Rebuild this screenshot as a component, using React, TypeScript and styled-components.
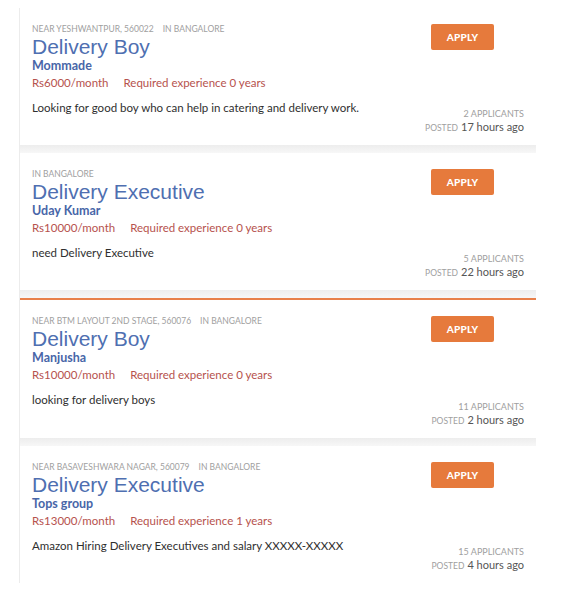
import React from 'react';
import styled, { createGlobalStyle } from 'styled-components';

const GlobalStyle = createGlobalStyle`
    html, body {
        margin: 0;
        padding: 0;
        background: #ffffff;
    }
    body {
        font-family: Lato, "Open Sans", sans-serif;
        -webkit-font-smoothing: antialiased;
    }
`;

const ListContainer = styled.div`
    margin: 8px 25px 0 19px;
    border-left: 1px solid #ececec;
    display: flex;
    flex-direction: column;
`;

const Separator = styled.div`
    height: 8px;
    background: linear-gradient(#ededed, #f7f7f7);
`;

const Card = styled.div<{ $active?: boolean }>`
    box-sizing: border-box;
    height: ${(p) => (p.$active ? 140 : 137)}px;
    background: #ffffff;
    border-top: ${(p) => (p.$active ? '2px solid #e8804a' : 'none')};
    display: flex;
    justify-content: space-between;
    padding: 16px 12px 10px 12px;
`;

const MainColumn = styled.div`
    display: flex;
    flex-direction: column;
`;

const Location = styled.div`
    font-size: 8.5px;
    line-height: 11px;
    color: #a0a0a0;
    text-transform: uppercase;
    display: flex;
    gap: 9px;
`;

const Title = styled.h2`
    margin: 0;
    font-family: "Liberation Sans", Arial, sans-serif;
    font-weight: 400;
    font-size: 21px;
    line-height: 24px;
    color: #4f6fb1;
`;

const Company = styled.div`
    font-weight: 700;
    font-size: 12.5px;
    line-height: 14px;
    color: #4866a8;
`;

const Terms = styled.div`
    margin-top: 3px;
    display: flex;
    gap: 15px;
    font-size: 11.5px;
    line-height: 14px;
    color: #b6524d;
`;

const Description = styled.p`
    margin: 11px 0 0;
    font-size: 11.5px;
    line-height: 14px;
    color: #2f2f2f;
`;

const SideColumn = styled.div`
    display: flex;
    flex-direction: column;
    align-items: flex-end;
`;

const ApplyButton = styled.button`
    margin: 0 30px 0 0;
    width: 63px;
    height: 26px;
    border: none;
    border-radius: 2px;
    background: #e67a3c;
    color: #ffffff;
    font-family: Lato, sans-serif;
    font-weight: 900;
    font-size: 10px;
    letter-spacing: 0.2px;
    cursor: pointer;
`;

const Meta = styled.div`
    margin-top: auto;
    display: flex;
    flex-direction: column;
    align-items: flex-end;
`;

const Applicants = styled.div`
    font-size: 9px;
    line-height: 12px;
    color: #a0a0a0;
    text-transform: uppercase;
`;

const Posted = styled.div`
    display: flex;
    align-items: baseline;
    gap: 3px;
    font-size: 11px;
    line-height: 13px;
    color: #555555;
`;

const PostedLabel = styled.span`
    font-size: 8.5px;
    color: #a0a0a0;
    text-transform: uppercase;
`;

type Job = {
    near?: string;
    city: string;
    title: string;
    company: string;
    salary: string;
    experience: number;
    description: string;
    applicants: number;
    posted: string;
    active?: boolean;
};

const jobs: Job[] = [
    {
        near: 'Near Yeshwantpur, 560022',
        city: 'Bangalore',
        title: 'Delivery Boy',
        company: 'Mommade',
        salary: 'Rs6000/month',
        experience: 0,
        description: 'Looking for good boy who can help in catering and delivery work.',
        applicants: 2,
        posted: '17 hours ago',
    },
    {
        city: 'Bangalore',
        title: 'Delivery Executive',
        company: 'Uday Kumar',
        salary: 'Rs10000/month',
        experience: 0,
        description: 'need Delivery Executive',
        applicants: 5,
        posted: '22 hours ago',
    },
    {
        near: 'Near BTM Layout 2nd Stage, 560076',
        city: 'Bangalore',
        title: 'Delivery Boy',
        company: 'Manjusha',
        salary: 'Rs10000/month',
        experience: 0,
        description: 'looking for delivery boys',
        applicants: 11,
        posted: '2 hours ago',
        active: true,
    },
    {
        near: 'Near Basaveshwara Nagar, 560079',
        city: 'Bangalore',
        title: 'Delivery Executive',
        company: 'Tops group',
        salary: 'Rs13000/month',
        experience: 1,
        description: 'Amazon Hiring Delivery Executives and salary XXXXX-XXXXX',
        applicants: 15,
        posted: '4 hours ago',
    },
];

function JobCard({ job }: { job: Job }) {
    return (
        <Card $active={job.active}>
            <MainColumn>
                <Location>
                    {job.near && <span>{job.near}</span>}
                    <span>In {job.city}</span>
                </Location>
                <Title>{job.title}</Title>
                <Company>{job.company}</Company>
                <Terms>
                    <span>{job.salary}</span>
                    <span>Required experience {job.experience} years</span>
                </Terms>
                <Description>{job.description}</Description>
            </MainColumn>
            <SideColumn>
                <ApplyButton>APPLY</ApplyButton>
                <Meta>
                    <Applicants>{job.applicants} Applicants</Applicants>
                    <Posted>
                        <PostedLabel>Posted</PostedLabel>
                        <span>{job.posted}</span>
                    </Posted>
                </Meta>
            </SideColumn>
        </Card>
    );
}

export default function App() {
    return (
        <>
            <GlobalStyle />
            <ListContainer>
                {jobs.map((job, i) => (
                    <React.Fragment key={i}>
                        {i > 0 && <Separator />}
                        <JobCard job={job} />
                    </React.Fragment>
                ))}
            </ListContainer>
        </>
    );
}
